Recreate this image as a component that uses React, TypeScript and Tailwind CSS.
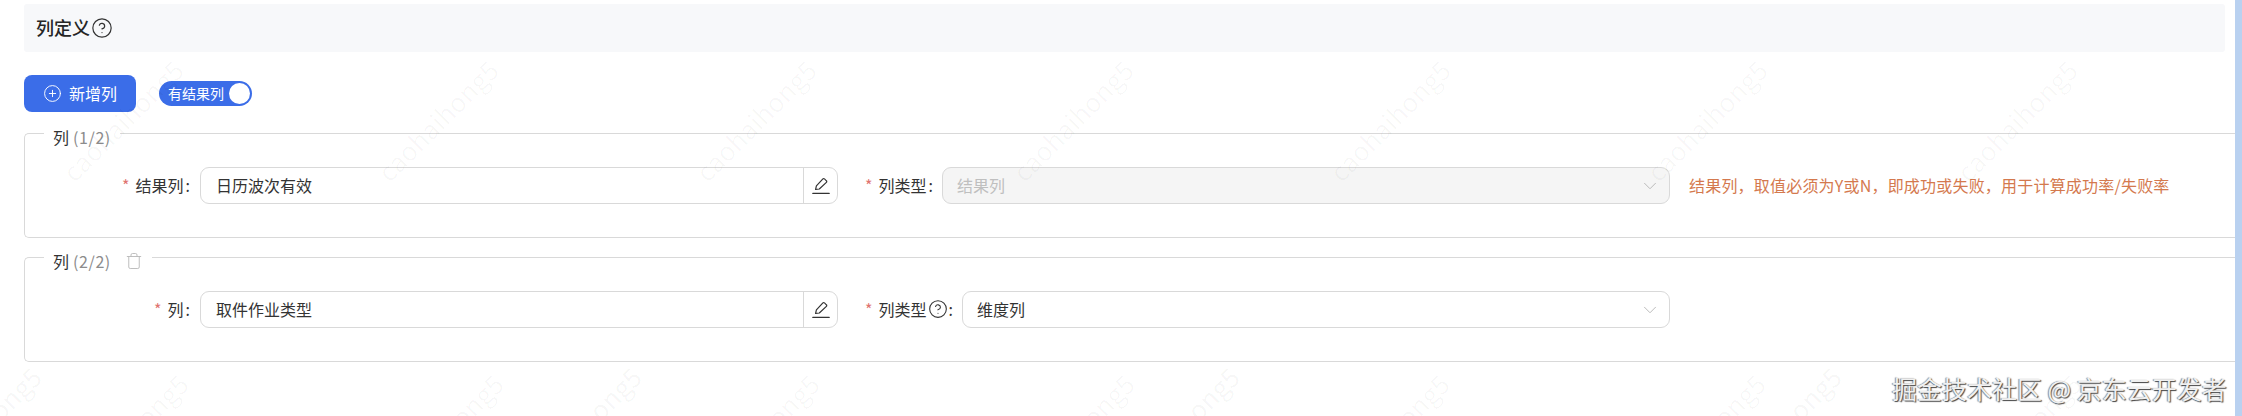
import React from "react";
import { ChevronDown, CirclePlus, CircleHelp, Trash } from "lucide-react";

const marks: [number, number][] = [
  [122, 120], [437, 120], [755, 120], [1072, 120], [1389, 120], [1706, 120], [2016, 120],
  [127, 434], [442, 434], [758, 434], [1073, 434], [1388, 434], [1704, 434], [2020, 434],
];
const darkMarks: [number, number][] = [
  [-20, 427], [580, 427], [1178, 427], [1780, 427],
];

function Pencil() {
  return (
    <svg width="18" height="18" viewBox="0 0 18 18" fill="none" stroke="#333" strokeWidth="1.2" strokeLinejoin="round">
      <path d="M3.6 12.4 L4.4 8.8 L10.9 1.9 A1.1 1.1 0 0 1 12.5 1.9 L14.4 3.8 A1.1 1.1 0 0 1 14.4 5.4 L7.3 12 Z" />
      <path d="M0.8 16.4 H17.2" strokeLinecap="round" />
    </svg>
  );
}

function Label({ text, help }: { text: string; help?: boolean }) {
  return (
    <span className="flex items-center pb-[2px] text-[16px] text-[#333]">
      <span className="mr-[6px] text-[#e0736f]">*</span>
      {text}
      {help && <CircleHelp className="ml-[1px] h-[20px] w-[20px] text-[#333]" strokeWidth={1.3} />}
      <span className={help ? "ml-[1px]" : "ml-[2px]"}>:</span>
    </span>
  );
}

function Row({ label, value, typeHelp, disabled }: { label: string; value: string; typeHelp?: boolean; disabled?: boolean }) {
  return (
    <div className="flex items-center">
      <div className="flex w-[175px] justify-end pr-[10px]">
        <Label text={label} />
      </div>
      <div className="flex h-[37px] w-[638px] rounded-[9px] border border-[#d9d9d9] bg-white">
        <div className="flex flex-1 items-center pb-[2px] pl-[15px] text-[16px] text-[#333]">{value}</div>
        <div className="flex w-[34px] items-center justify-center border-l border-[#d9d9d9]">
          <Pencil />
        </div>
      </div>
      <div className="ml-[27px] mr-[9px]">
        <Label text="列类型" help={typeHelp} />
      </div>
      <div
        className={
          disabled
            ? "flex h-[37px] flex-1 items-center justify-between rounded-[9px] border border-[#d9d9d9] bg-[#f5f5f5] pl-[14px] pr-[8px] text-[16px] text-[#bfbfbf]"
            : "flex h-[37px] flex-1 items-center justify-between rounded-[9px] border border-[#d9d9d9] bg-white pl-[14px] pr-[8px] text-[16px] text-[#333]"
        }
      >
        <span className="pb-[2px]">{value === "日历波次有效" ? "结果列" : "维度列"}</span>
        <ChevronDown className="h-[22px] w-[22px] text-[#b5b5b5]" strokeWidth={1} />
      </div>
    </div>
  );
}

function Group({ children, note, index, trash }: { children: React.ReactNode; note?: string; index: string; trash?: boolean }) {
  return (
    <div className="relative h-[105px] rounded-l-[5px] border border-r-0 border-[#d9d9d9] pt-[33px]">
      <div className="absolute left-[19px] top-[-8px] flex h-[22px] items-center bg-white px-[9px] text-[16px] text-[#333]">
        列
        <span className="ml-[4px] tracking-[0.6px] text-[#8c8c8c]">{index}</span>
        {trash && <Trash className="ml-[14px] h-[18px] w-[18px] text-[#b8b8b8]" strokeWidth={1.2} />}
      </div>
      <div className="flex">
        <div className="w-[1645px]">{children}</div>
        {note && (
          <div className="ml-[19px] flex h-[37px] items-center whitespace-nowrap pb-[2px] text-[16px] tracking-[0.2px] text-[#d4794e]">
            {note}
          </div>
        )}
      </div>
    </div>
  );
}

export default function App() {
  return (
    <div className="relative flex h-[416px] w-[2242px] overflow-hidden bg-white [font-family:'Noto_Sans_CJK_SC','Noto_Sans',sans-serif]">
      <div className="flex-1 pl-[24px] pt-[4px]">
        <div className="mr-[10px] flex h-[48px] items-center rounded-[3px] bg-[#f7f8fa] pl-[12px] text-[18px] font-medium text-[#262626]">
          <span className="pb-[2px]">列定义</span>
          <CircleHelp className="ml-[1px] h-[22px] w-[22px] text-[#333]" strokeWidth={1.3} />
        </div>
        <div className="mt-[23px] flex items-center">
          <div className="flex h-[37px] w-[112px] items-center justify-center gap-[7px] rounded-[8px] bg-[#3b6de8] text-[16px] text-white">
            <CirclePlus className="h-[19px] w-[19px]" strokeWidth={1.2} />
            <span className="pb-[2px]">新增列</span>
          </div>
          <div className="ml-[23px] flex h-[25px] w-[93px] items-center justify-between rounded-full bg-[#3b6de8] pl-[9px] pr-[2px] text-[14px] text-white">
            <span className="pb-[1px]">有结果列</span>
            <span className="h-[21px] w-[21px] rounded-full bg-white" />
          </div>
        </div>
        <div className="mt-[21px]">
          <Group index="(1/2)" note={"结果列\uFF0C取值必须为Y或N\uFF0C即成功或失败\uFF0C用于计算成功率/失败率"}>
            <Row label="结果列" value="日历波次有效" disabled />
          </Group>
        </div>
        <div className="mt-[19px]">
          <Group index="(2/2)" trash>
            <Row label="列" value="取件作业类型" typeHelp />
          </Group>
        </div>
      </div>
      <div className="w-[7px] bg-[#b9d1f0]" />

      {marks.map(([x, y], i) => (
        <span
          key={i}
          className="pointer-events-none absolute -translate-x-1/2 -translate-y-1/2 -rotate-45 whitespace-nowrap text-[26px] text-black/[0.03]"
          style={{ left: x, top: y }}
        >
          caohaihong5
        </span>
      ))}
      {darkMarks.map(([x, y], i) => (
        <span
          key={i}
          className="pointer-events-none absolute -translate-x-1/2 -translate-y-1/2 -rotate-45 whitespace-nowrap text-[26px] text-black/[0.04]"
          style={{ left: x, top: y }}
        >
          caohaihong5
        </span>
      ))}
      <span className="absolute left-[1892px] top-[370px] whitespace-nowrap text-[25px] text-[#f0f0f0] [text-shadow:1px_1px_1px_#444,-1px_0_1px_#888]">
        掘金技术社区 @ 京东云开发者
      </span>
    </div>
  );
}
